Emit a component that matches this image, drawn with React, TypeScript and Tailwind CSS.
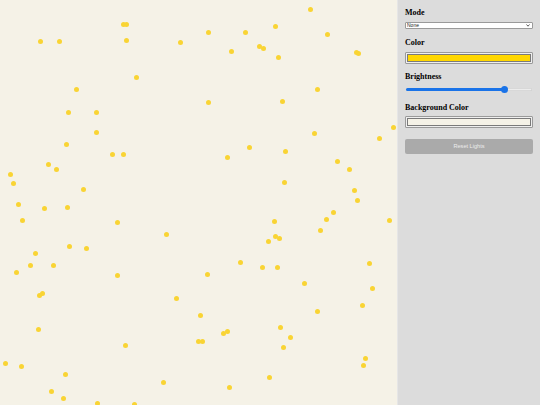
const lights: [number, number][] = [
  [310, 9], [123, 24], [126, 24], [275, 26], [208, 32], [245, 32], [327, 34], [40, 41], [59, 41], [126, 40],
  [180, 42], [259, 46], [263, 48], [231, 51], [356, 52], [358, 53], [278, 57], [136, 77], [76, 89], [317, 89],
  [208, 102], [282, 101], [68, 112], [96, 112], [393, 127], [96, 132], [314, 133], [379, 138], [66, 144], [249, 147],
  [285, 151], [112, 154], [123, 154], [227, 157], [337, 161], [48, 164], [56, 169], [349, 169], [10, 174], [13, 183],
  [284, 182], [83, 189], [354, 190], [357, 200], [18, 204], [44, 208], [67, 207], [333, 212], [22, 220], [117, 222],
  [326, 219], [274, 221], [389, 220], [320, 230], [166, 234], [275, 236], [279, 238], [268, 241], [69, 246], [86, 248],
  [35, 253], [30, 265], [53, 265], [240, 262], [369, 263], [262, 267], [277, 267], [16, 272], [117, 275], [207, 274],
  [304, 283], [42, 293], [39, 295], [176, 298], [372, 288], [317, 311], [362, 305], [200, 315], [38, 329], [227, 331],
  [223, 333], [280, 327], [290, 337], [198, 341], [202, 341], [125, 345], [283, 347], [365, 358], [363, 365], [5, 363],
  [21, 366], [65, 374], [269, 377], [163, 382], [229, 387], [51, 391], [63, 398], [97, 403], [134, 404],
];

function Heading({ children, className = '' }: { children: React.ReactNode; className?: string }) {
  return (
    <h3 className={`text-[8px] leading-[10px] font-bold text-black font-['Liberation_Serif',serif] ${className}`}>
      {children}
    </h3>
  );
}

function Swatch({ color, className = '' }: { color: string; className?: string }) {
  return (
    <div className={`flex h-[12px] border border-[#9a9a9a] bg-[#efefef] p-[1px] rounded-[1px] ${className}`}>
      <div className="flex-1 border border-[#7a7a7a]" style={{ backgroundColor: color }} />
    </div>
  );
}

export default function App() {
  const brightness = 0.78;

  return (
    <div className="flex w-[540px] h-[405px] overflow-hidden">
      <div className="relative flex-1 bg-[#f5f2e7] overflow-hidden">
        {lights.map(([x, y], i) => (
          <span
            key={i}
            className="absolute w-[5px] h-[5px] rounded-full bg-[#f9d434]"
            style={{ left: x - 2.5, top: y - 2.5 }}
          />
        ))}
      </div>

      <aside className="w-[143px] shrink-0 bg-[#dcdcdc] border-l border-[#e6e6e6] px-[7px] pt-[8px] flex flex-col">
        <Heading>Mode</Heading>
        <div className="mt-[4px] h-[7px] flex items-center justify-between bg-white border border-[#9a9a9a] rounded-[1px] pl-[1px] pr-[2px]">
          <span className="text-[5px] leading-none text-[#222] font-['Liberation_Sans',sans-serif]">None</span>
          <svg width="4" height="3" viewBox="0 0 4 3" className="shrink-0">
            <path d="M0.5 0.5 L2 2.2 L3.5 0.5" fill="none" stroke="#333" strokeWidth="0.8" />
          </svg>
        </div>

        <Heading className="mt-[9px]">Color</Heading>
        <Swatch color="#ffd700" className="mt-[4px]" />

        <Heading className="mt-[8px]">Brightness</Heading>
        <div className="mt-[3px] h-[8px] flex items-center px-[1px]">
          <div className="relative flex-1 h-[3px] rounded-full bg-[#ececec] shadow-[inset_0_0_0_0.5px_#c4c4c4]">
            <div className="absolute left-0 top-0 h-[3px] rounded-full bg-[#1a73e8]" style={{ width: `${brightness * 100}%` }} />
            <div
              className="absolute top-[-2px] w-[7px] h-[7px] -ml-[3.5px] rounded-full bg-[#1a73e8]"
              style={{ left: `${brightness * 100}%` }}
            />
          </div>
        </div>

        <Heading className="mt-[10px]">Background Color</Heading>
        <Swatch color="#f5f2e7" className="mt-[3px]" />

        <button className="mt-[11px] h-[15px] w-full rounded-[2px] bg-[#aaaaaa] text-[5.6px] text-[#ececec] font-['Liberation_Sans',sans-serif]">
          Reset Lights
        </button>
      </aside>
    </div>
  );
}
